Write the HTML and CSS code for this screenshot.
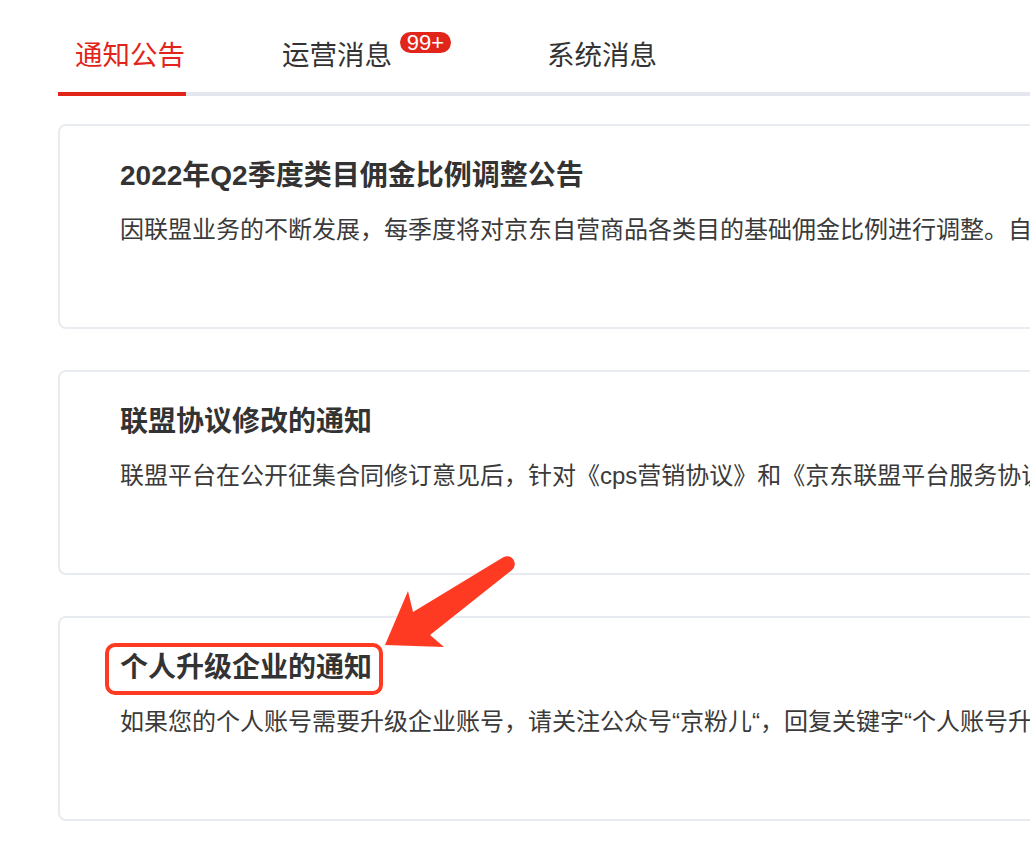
FILE: index.html
```html
<!DOCTYPE html>
<html lang="zh-CN">
<head>
<meta charset="utf-8">
<title>消息中心</title>
<link rel="stylesheet" href="styles.css">
</head>
<body>
<div class="page">
  <nav class="tabs">
    <div class="tab tab-active">通知公告</div>
    <div class="tab"><span>运营消息</span><span class="badge">99+</span></div>
    <div class="tab">系统消息</div>
  </nav>
  <div class="cards">
    <div class="card">
      <div class="card-title">2022年Q2季度类目佣金比例调整公告</div>
      <div class="card-text">因联盟业务的不断发展，每季度将对京东自营商品各类目的基础佣金比例进行调整。自2022年4月1日起执行新的佣金比例。</div>
    </div>
    <div class="card">
      <div class="card-title">联盟协议修改的通知</div>
      <div class="card-text">联盟平台在公开征集合同修订意见后，针对《cps营销协议》和《京东联盟平台服务协议》进行了修订。</div>
    </div>
    <div class="card">
      <div class="card-title"><span class="marked">个人升级企业的通知</span></div>
      <div class="card-text">如果您的个人账号需要升级企业账号，请关注公众号“京粉儿“，回复关键字“个人账号升级企业账号”获取办理流程。</div>
    </div>
  </div>
  <svg class="arrow" width="1030" height="856" viewBox="0 0 1030 856" aria-hidden="true">
    <path d="M385 645 L408 591 L413 612 L502 558 A7.8 7.8 0 0 1 512 570 L430 635 L444 647 Z" fill="#ff3a22"/>
  </svg>
</div>
</body>
</html>
```

FILE: styles.css
```css
html, body {
  margin: 0;
  padding: 0;
  background: #ffffff;
  overflow: hidden;
}

body {
  font-family: "Liberation Sans", "Noto Sans CJK SC", sans-serif;
  color: #333333;
}

.page {
  position: relative;
  width: 1030px;
  height: 856px;
  padding-left: 58px;
  box-sizing: border-box;
  overflow: hidden;
}

.tabs {
  display: flex;
  gap: 96px;
  padding-top: 36px;
  border-bottom: 4px solid #e4e7ed;
  margin-right: -100px;
}

.tab {
  display: flex;
  align-items: flex-start;
  font-size: 27.5px;
  line-height: 40px;
  padding-bottom: 16px;
  color: #333333;
  white-space: nowrap;
}

.tab-active {
  color: #e1251b;
  padding-left: 17px;
  padding-right: 1px;
  border-bottom: 4px solid #e1251b;
  margin-bottom: -4px;
}

.badge {
  display: inline-block;
  margin-left: 8px;
  margin-top: -4px;
  width: 51px;
  height: 21px;
  border-radius: 11px;
  background: #e1251b;
  color: #ffffff;
  font-family: "Liberation Sans", sans-serif;
  font-size: 22px;
  line-height: 22px;
  text-align: center;
}

.cards {
  margin-top: 28px;
  width: 1100px;
}

.card {
  box-sizing: border-box;
  height: 205px;
  margin-bottom: 41px;
  padding: 32px 0 0 60px;
  border: 2px solid #e8ebf0;
  border-radius: 8px;
  overflow: hidden;
}

.card-title {
  font-size: 28px;
  line-height: 36px;
  font-weight: bold;
  color: #333333;
  white-space: nowrap;
}

.card-text {
  margin-top: 18px;
  font-size: 24px;
  line-height: 36px;
  color: #3a3a3a;
  white-space: nowrap;
}

.marked {
  position: relative;
  display: inline-block;
}

.marked::after {
  content: "";
  position: absolute;
  left: -15px;
  right: -11px;
  top: -7px;
  bottom: -9px;
  border: 4px solid #ff3a22;
  border-radius: 10px;
}

.arrow {
  position: absolute;
  left: 0;
  top: 0;
  pointer-events: none;
}
```
